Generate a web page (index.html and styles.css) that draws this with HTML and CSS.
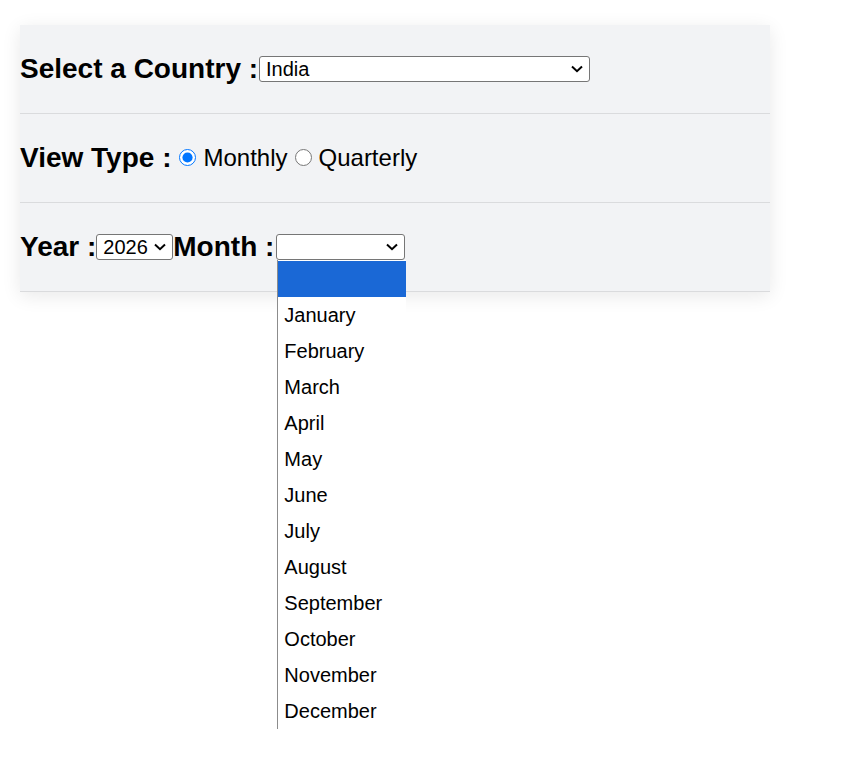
FILE: index.html
```html
<!DOCTYPE html>
<html lang="en">
<head>
<meta charset="utf-8">
<title>Country Report Filters</title>
<link rel="stylesheet" href="styles.css">
</head>
<body>
<div class="page">
<div class="panel">
  <div class="row">
    <span class="label">Select a Country :</span>
    <span class="sel-box sel-country">
      <select class="sel">
        <option>India</option>
      </select>
      <svg class="chev" viewBox="0 0 12 8" width="12" height="8" aria-hidden="true"><path d="M1 1.5 L6 6.2 L11 1.5" fill="none" stroke="#000" stroke-width="2"/></svg>
    </span>
  </div>
  <div class="row">
    <span class="label label-gap">View Type :</span>
    <label class="opt"><input type="radio" name="vt" class="radio" checked><span>Monthly</span></label>
    <label class="opt opt-second"><input type="radio" name="vt" class="radio"><span>Quarterly</span></label>
  </div>
  <div class="row">
    <span class="label">Year :</span>
    <span class="sel-box sel-year">
      <select class="sel">
        <option>2026</option>
      </select>
      <svg class="chev" viewBox="0 0 12 8" width="12" height="8" aria-hidden="true"><path d="M1 1.5 L6 6.2 L11 1.5" fill="none" stroke="#000" stroke-width="2"/></svg>
    </span>
    <span class="label">Month :</span>
    <span class="sel-box sel-month">
      <select class="sel">
        <option></option>
      </select>
      <svg class="chev" viewBox="0 0 12 8" width="12" height="8" aria-hidden="true"><path d="M1 1.5 L6 6.2 L11 1.5" fill="none" stroke="#000" stroke-width="2"/></svg>
      <ul class="dropdown">
        <li class="item active">&nbsp;</li>
        <li class="item">January</li>
        <li class="item">February</li>
        <li class="item">March</li>
        <li class="item">April</li>
        <li class="item">May</li>
        <li class="item">June</li>
        <li class="item">July</li>
        <li class="item">August</li>
        <li class="item">September</li>
        <li class="item">October</li>
        <li class="item">November</li>
        <li class="item">December</li>
      </ul>
    </span>
  </div>
</div>
</div>
</body>
</html>
```

FILE: styles.css
```css
html, body {
  margin: 0;
  padding: 0;
  background: #ffffff;
  font-family: "Liberation Sans", Arial, sans-serif;
  color: #000;
}

.page {
  min-height: 773px;
  padding-top: 25px;
  box-sizing: border-box;
}

.panel {
  margin: 0 0 0 20px;
  width: 750px;
  background: #f2f3f5;
  box-shadow: 0 4px 18px rgba(0, 0, 0, 0.09);
}

.row {
  display: flex;
  align-items: center;
  height: 88px;
  border-bottom: 1px solid #dadbdd;
}

.label {
  font-weight: bold;
  font-size: 28px;
  line-height: 32px;
}

.label-gap {
  margin-right: 8px;
}

.sel-box {
  position: relative;
  display: block;
  height: 26px;
}

.sel {
  -webkit-appearance: none;
  appearance: none;
  display: block;
  box-sizing: border-box;
  width: 100%;
  height: 26px;
  font-family: "Liberation Sans", Arial, sans-serif;
  font-size: 20px;
  line-height: 24px;
  color: #000;
  background-color: #fff;
  border: 1px solid #767676;
  border-radius: 3px;
  padding: 0 0 0 6px;
  margin: 0;
}

.chev {
  position: absolute;
  right: 7px;
  top: 9px;
  pointer-events: none;
}

.sel-country {
  width: 331px;
  margin-left: 1px;
}

.sel-year {
  width: 77px;
}

.sel-month {
  width: 129px;
  margin-left: 2px;
}

.opt {
  display: flex;
  align-items: center;
  font-size: 24px;
  line-height: 28px;
}

.opt-second {
  margin-left: 7px;
}

.radio {
  width: 17px;
  height: 17px;
  margin: 0 7px 2px 0;
}

.dropdown {
  position: absolute;
  top: 26px;
  left: 1px;
  width: 128px;
  margin: 0;
  padding: 1px 0 0;
  list-style: none;
  background: #fff;
  border-left: 1px solid #8c8c8c;
  z-index: 5;
}

.item {
  height: 36px;
  line-height: 36px;
  padding-left: 6px;
  font-size: 20px;
  white-space: nowrap;
}

.item.active {
  background: #1a68d6;
}
```
